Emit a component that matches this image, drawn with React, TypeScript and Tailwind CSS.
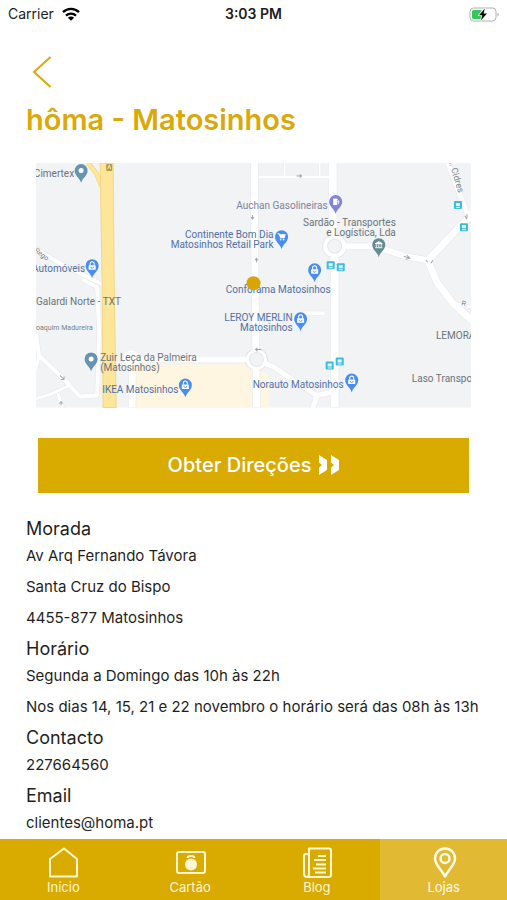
import React from "react";

type PinKind = "shop" | "cart" | "fuel" | "bank" | "place";

const pinColors: Record<PinKind, string> = {
  shop: "#4a8df0",
  cart: "#4a8df0",
  fuel: "#8484d6",
  bank: "#678b93",
  place: "#6494ae",
};

const pins: { x: number; y: number; kind: PinKind }[] = [
  { x: 45, y: 20, kind: "place" },
  { x: 56, y: 115, kind: "shop" },
  { x: 245, y: 86, kind: "cart" },
  { x: 299, y: 51, kind: "fuel" },
  { x: 342, y: 94, kind: "bank" },
  { x: 278, y: 119, kind: "shop" },
  { x: 264, y: 168, kind: "shop" },
  { x: 55, y: 208, kind: "place" },
  { x: 149, y: 234, kind: "shop" },
  { x: 315, y: 229, kind: "shop" },
];

const busStops = [
  [294, 102],
  [304, 104],
  [421, 42],
  [427, 64],
  [293, 202],
  [303, 198],
];

const labels: {
  x: number;
  y: number;
  text: string;
  color: string;
  end?: boolean;
}[] = [
  { x: 38, y: 14, text: "Cimertex", color: "#6b7378", end: true },
  { x: 291, y: 46, text: "Auchan Gasolineiras", color: "#7c84a3", end: true },
  { x: 237, y: 75, text: "Continente Bom Dia", color: "#5070a8", end: true },
  { x: 237, y: 85, text: "Matosinhos Retail Park", color: "#5070a8", end: true },
  { x: 359, y: 63, text: "Sardão - Transportes", color: "#6b7378", end: true },
  { x: 359, y: 73, text: "e Logística, Lda", color: "#6b7378", end: true },
  { x: 49, y: 109, text: "Automóveis", color: "#5070a8", end: true },
  { x: 294, y: 130, text: "Conforama Matosinhos", color: "#5070a8", end: true },
  { x: 0, y: 142, text: "Galardi Norte - TXT", color: "#6b7378" },
  { x: 256, y: 158, text: "LEROY MERLIN", color: "#5070a8", end: true },
  { x: 256, y: 168, text: "Matosinhos", color: "#5070a8", end: true },
  { x: 399, y: 176, text: "LEMORA", color: "#6b7378" },
  { x: 64, y: 198, text: "Zuir Leça da Palmeira", color: "#6b7378" },
  { x: 64, y: 208, text: "(Matosinhos)", color: "#6b7378" },
  { x: 66, y: 229, text: "IKEA Matosinhos", color: "#5070a8" },
  { x: 307, y: 224, text: "Norauto Matosinhos", color: "#5070a8", end: true },
  { x: 375, y: 219, text: "Laso Transpo", color: "#6b7378" },
];

const roads = [
  { d: "M218 0V60L220 244", width: 7 },
  { d: "M222 14H296", width: 3 },
  { d: "M248 0V14M283 0V14", width: 2 },
  { d: "M296 0V70L298 83V244", width: 8 },
  { d: "M298 83H338L368 93L391 97", width: 6 },
  { d: "M391 97L428 58L436 51", width: 7 },
  { d: "M391 97L400 119L416 140L436 158", width: 7 },
  { d: "M416 140L436 144", width: 3 },
  { d: "M411 0L430 50H436", width: 5 },
  { d: "M266 150H288", width: 4 },
  { d: "M95 196H220", width: 6 },
  { d: "M96 194V244", width: 7 },
  { d: "M220 196L236 203L280 232L298 228M280 232L276 246", width: 5 },
  { d: "M0 86L24 100L66 121", width: 4 },
  { d: "M46 116L61 124L63 167L61 232L44 233L26 214L3 192L0 170", width: 4 },
  { d: "M0 235L14 231L33 222M22 230L27 246M0 206L3 192", width: 3 },
];

function Pin({ x, y, kind }: { x: number; y: number; kind: PinKind }) {
  return (
    <g transform={`translate(${x} ${y})`}>
      <path
        d="M0 0C-1 -5 -6.5 -7 -6.5 -12.5A6.5 6.5 0 0 1 6.5 -12.5C6.5 -7 1 -5 0 0Z"
        fill={pinColors[kind]}
      />
      {kind === "place" && <circle cy={-12.5} r={2.5} fill="#fff" />}
      {kind === "shop" && (
        <>
          <rect x={-3.5} y={-13} width={7} height={4.5} rx={0.5} fill="#fff" />
          <path
            d="M-2 -13V-14.5A2 2 0 0 1 2 -14.5V-13"
            fill="none"
            stroke="#fff"
          />
          <path
            d="M-1.5 -11.5A1.5 1.5 0 0 0 1.5 -11.5"
            fill="none"
            stroke={pinColors.shop}
            strokeWidth={0.8}
          />
        </>
      )}
      {kind === "cart" && (
        <>
          <path
            d="M-4 -15.5H-2.5L-1 -11.5H2.5L3.5 -14.5H-2"
            fill="#fff"
            stroke="#fff"
          />
          <circle cx={-1} cy={-9.5} r={0.8} fill="#fff" />
          <circle cx={2} cy={-9.5} r={0.8} fill="#fff" />
        </>
      )}
      {kind === "fuel" && (
        <>
          <rect x={-2.5} y={-15.5} width={4} height={6.5} fill="#fff" />
          <path
            d="M1.5 -12.5H2.8V-10M1.5 -15L3 -13.5V-11"
            fill="none"
            stroke="#fff"
            strokeWidth={0.8}
          />
        </>
      )}
      {kind === "bank" && (
        <path
          d="M-3.5 -13.5L0 -15.5L3.5 -13.5ZM-2.5 -13V-10M0 -13V-10M2.5 -13V-10M-3.5 -9.5H3.5"
          fill="#fff"
          stroke="#fff"
          strokeWidth={0.9}
        />
      )}
    </g>
  );
}

function StoreMap() {
  return (
    <svg
      viewBox="0 0 434 244"
      className="block w-full"
      role="img"
      aria-label="Mapa da loja"
    >
      <rect width={434} height={244} fill="#f1f3f4" />
      <path d="M99 201H216V244H99ZM224 207L233 212V244H224Z" fill="#fef6e0" />
      <g fill="none" stroke="#e3e6e9" strokeLinejoin="round">
        {roads.map((road) => (
          <path key={road.d} d={road.d} strokeWidth={road.width + 1} />
        ))}
      </g>
      <circle cx={95} cy={195} r={8} fill="#fff" />
      <circle cx={298} cy={83} r={12} fill="#fff" stroke="#e3e6e9" />
      <circle cx={220} cy={196} r={11} fill="#fff" stroke="#e3e6e9" />
      <g fill="none" stroke="#fff" strokeLinejoin="round">
        {roads.map((road) => (
          <path key={road.d} d={road.d} strokeWidth={road.width} />
        ))}
      </g>
      <circle cx={298} cy={83} r={7} fill="#f1f3f4" stroke="#e3e6e9" />
      <circle cx={220} cy={196} r={7} fill="#f1f3f4" stroke="#e3e6e9" />

      <path d="M52 0L60 10L66 24" fill="none" stroke="#f5dc8b" strokeWidth={5} />
      <path d="M52 0L60 10L66 24" fill="none" stroke="#fde79c" strokeWidth={3} />
      <path
        d="M64 0H77L78 122L80 244H67L66 122Z"
        fill="#fde59a"
        stroke="#f3d77f"
      />
      <rect x={70} y={1} width={6} height={7} rx={1} fill="#b59b4c" />
      <path d="M71.500 6L73 2.500L74.500 6" fill="none" stroke="#fde59a" />

      {/* one-way arrows */}
      <g stroke="#a4a8ac" fill="none">
        <path d="M216 52V56M214.500 54L216 56L217.500 54" />
        <path d="M220 99V95M218.500 97L220 95L221.500 97" />
        <path d="M260 13H265M263 11.500L265 13L263 14.500" />
        <path d="M367 93L373 95M370 92L373 95L369 96" />
        <path d="M389 97L391 99M394 100L396 97" />
        <path d="M428 53L430 56M430 51V55" />
        <path d="M24 212L28 216M28 213V216H25" />
        <path d="M25 242V238M23.500 240L25 238L26.500 240" />
        <path d="M219 186H225M221 184.500L219 186L221 188" />
      </g>

      {busStops.map(([x, y]) => (
        <g key={x}>
          <rect x={x - 4} y={y - 4} width={8} height={8} rx={1} fill="#3dbbdc" />
          <rect x={x - 2} y={y - 2} width={4} height={3} fill="#e6fafe" />
          <path d={`M${x - 2} ${y + 2.5}h4`} stroke="#e6fafe" />
        </g>
      ))}

      <g className="font-['Roboto',sans-serif]" fontSize={10}>
        {labels.map((label) => (
          <text
            key={label.text + label.y}
            x={label.x}
            y={label.y}
            fill={label.color}
            textAnchor={label.end ? "end" : "start"}
          >
            {label.text}
          </text>
        ))}
        <text x={0} y={167} fontSize={7} fill="#7d8286">
          oaquim Madureira
        </text>
        <text
          fontSize={9}
          fill="#7d8286"
          transform="translate(411 -4) rotate(73)"
        >
          R. Cidres
        </text>
        <text fontSize={7} fill="#7d8286" transform="translate(-2 88) rotate(38)">
          Rego
        </text>
        <text
          fontSize={7}
          fill="#7d8286"
          transform="translate(424 142) rotate(14)"
        >
          R.
        </text>
      </g>

      {pins.map((pin) => (
        <Pin key={`${pin.x}-${pin.y}`} {...pin} />
      ))}
      <circle cx={217} cy={120} r={7} fill="#d9a404" />
    </svg>
  );
}

function StatusBar() {
  return (
    <div className="grid h-7 grid-cols-3 items-center px-2 text-sm text-[#1c1c1c]">
      <div className="flex items-center gap-2">
        <span>Carrier</span>
        <svg viewBox="0 0 18 14" className="h-3.5 w-[18px]" aria-hidden="true">
          <g fill="none" stroke="#000" strokeWidth={2.3}>
            <path d="M1 5.200A11.500 11.500 0 0 1 17 5.200" />
            <path d="M4 8.600A7.200 7.200 0 0 1 14 8.600" />
          </g>
          <path d="M9 13.800L5.900 10.700A4.400 4.400 0 0 1 12.100 10.700Z" />
        </svg>
      </div>
      <span className="text-center font-semibold">3:03 PM</span>
      <svg
        viewBox="0 0 31 15"
        className="h-[15px] w-[31px] justify-self-end"
        aria-label="Bateria a carregar"
      >
        <rect
          x={2}
          y={1}
          width={26}
          height={13}
          rx={3.5}
          fill="#fff"
          stroke="#aeb0b2"
        />
        <path d="M29.500 5.500Q32 7.500 29.500 9.500Z" fill="#aeb0b2" />
        <rect x={4} y={3} width={10} height={9} rx={1.5} fill="#35c759" />
        <path
          d="M16.800 1.500L11 8.300H14.300L13 13.300L19 6.400H15.600Z"
          stroke="#fff"
          strokeWidth={1.6}
          paintOrder="stroke"
        />
      </svg>
    </div>
  );
}

const sections = [
  {
    title: "Morada",
    lines: ["Av Arq Fernando Távora", "Santa Cruz do Bispo", "4455-877 Matosinhos"],
  },
  {
    title: "Horário",
    lines: [
      "Segunda a Domingo das 10h às 22h",
      "Nos dias 14, 15, 21 e 22 novembro o horário será das 08h às 13h",
    ],
  },
  { title: "Contacto", lines: ["227664560"] },
  { title: "Email", lines: ["clientes@homa.pt"] },
];

const tabs = [
  {
    label: "Início",
    icon: <path d="M3 12L17 1.500L30 12V29.500H3Z" />,
  },
  {
    label: "Cartão",
    icon: (
      <>
        <rect x={3} y={5} width={28} height={21} rx={2} />
        <circle cx={17} cy={17.500} r={6} fill="currentColor" stroke="none" />
        <path
          d="M13.500 11Q13.500 9 17 9Q20.500 9 20.500 11"
          strokeWidth={2}
        />
      </>
    ),
  },
  {
    label: "Blog",
    icon: (
      <>
        <path d="M8 1.500H28Q30 1.500 30 3.500V28Q30 30 28 30H6Q3 30 3 27V9Q3 7 5 7H8ZM8 7V27Q8 30 6 30" />
        <path d="M17 9H25M13 13H25M15 17.500H25M12 21.500H25M14 25.500H25" />
      </>
    ),
  },
  {
    label: "Lojas",
    icon: (
      <>
        <path
          d="M17 29.500C14 23 7 18 7 11.500A10 10 0 0 1 27 11.500C27 18 20 23 17 29.500Z"
          strokeWidth={2.5}
        />
        <circle cx={17} cy={11.500} r={4.500} strokeWidth={2.5} />
      </>
    ),
    active: true,
  },
];

export default function App() {
  return (
    <div className="flex min-h-screen flex-col bg-white font-['Inter','Liberation_Sans',sans-serif]">
      <StatusBar />

      <main className="px-[26px] text-[#1f1f1f]">
        <button
          type="button"
          aria-label="Voltar"
          className="mt-6 block py-1 pl-1.5 text-[#d9a90a]"
        >
          <svg
            viewBox="0 0 20 32"
            className="h-8 w-5"
            fill="none"
            stroke="currentColor"
            strokeWidth={2}
          >
            <path d="M18.500 1L2 16L18.500 31" />
          </svg>
        </button>
        <h1 className="mt-2 text-[29px] leading-10 font-semibold text-[#d9a90a]">
          hôma - Matosinhos
        </h1>

        <div className="mt-[23px] px-2.5">
          <StoreMap />
        </div>

        <div className="mt-[30px] px-3">
          <button
            type="button"
            className="flex h-[55px] w-full items-center justify-center gap-2 bg-[#d9aa00] text-xl font-medium text-white"
          >
            Obter Direções
            <svg
              viewBox="0 0 20 20"
              className="h-5 w-5"
              fill="currentColor"
              aria-hidden="true"
            >
              <path d="M0 0L8 5V15L0 20V12.500L3 10L0 7.500Z" />
              <path d="M12 0L20 5V15L12 20V12.500L15 10L12 7.500Z" />
            </svg>
          </button>
        </div>

        <div className="mt-[25px] flex flex-col gap-[5px]">
          {sections.map((section) => (
            <section key={section.title}>
              <h2 className="text-lg leading-[22px]">{section.title}</h2>
              {section.lines.map((line) => (
                <p key={line} className="text-[15px] leading-[31px]">
                  {line}
                </p>
              ))}
            </section>
          ))}
        </div>
      </main>

      <nav className="sticky bottom-0 mt-auto grid grid-cols-4 bg-[#d9aa00]">
        {tabs.map((tab) => (
          <a
            key={tab.label}
            href="#"
            aria-current={tab.active ? "page" : undefined}
            className={
              tab.active
                ? "flex h-[61px] flex-col items-center bg-[#e1b933] pt-2 text-[#fffbe8]"
                : "flex h-[61px] flex-col items-center pt-2 text-[#fff6d2]"
            }
          >
            <svg
              viewBox="0 0 32 32"
              className="h-8 w-8"
              fill="none"
              stroke="currentColor"
              strokeWidth={2}
              strokeLinejoin="round"
              aria-hidden="true"
            >
              {tab.icon}
            </svg>
            <span className="text-[13px] leading-4">{tab.label}</span>
          </a>
        ))}
      </nav>
    </div>
  );
}
